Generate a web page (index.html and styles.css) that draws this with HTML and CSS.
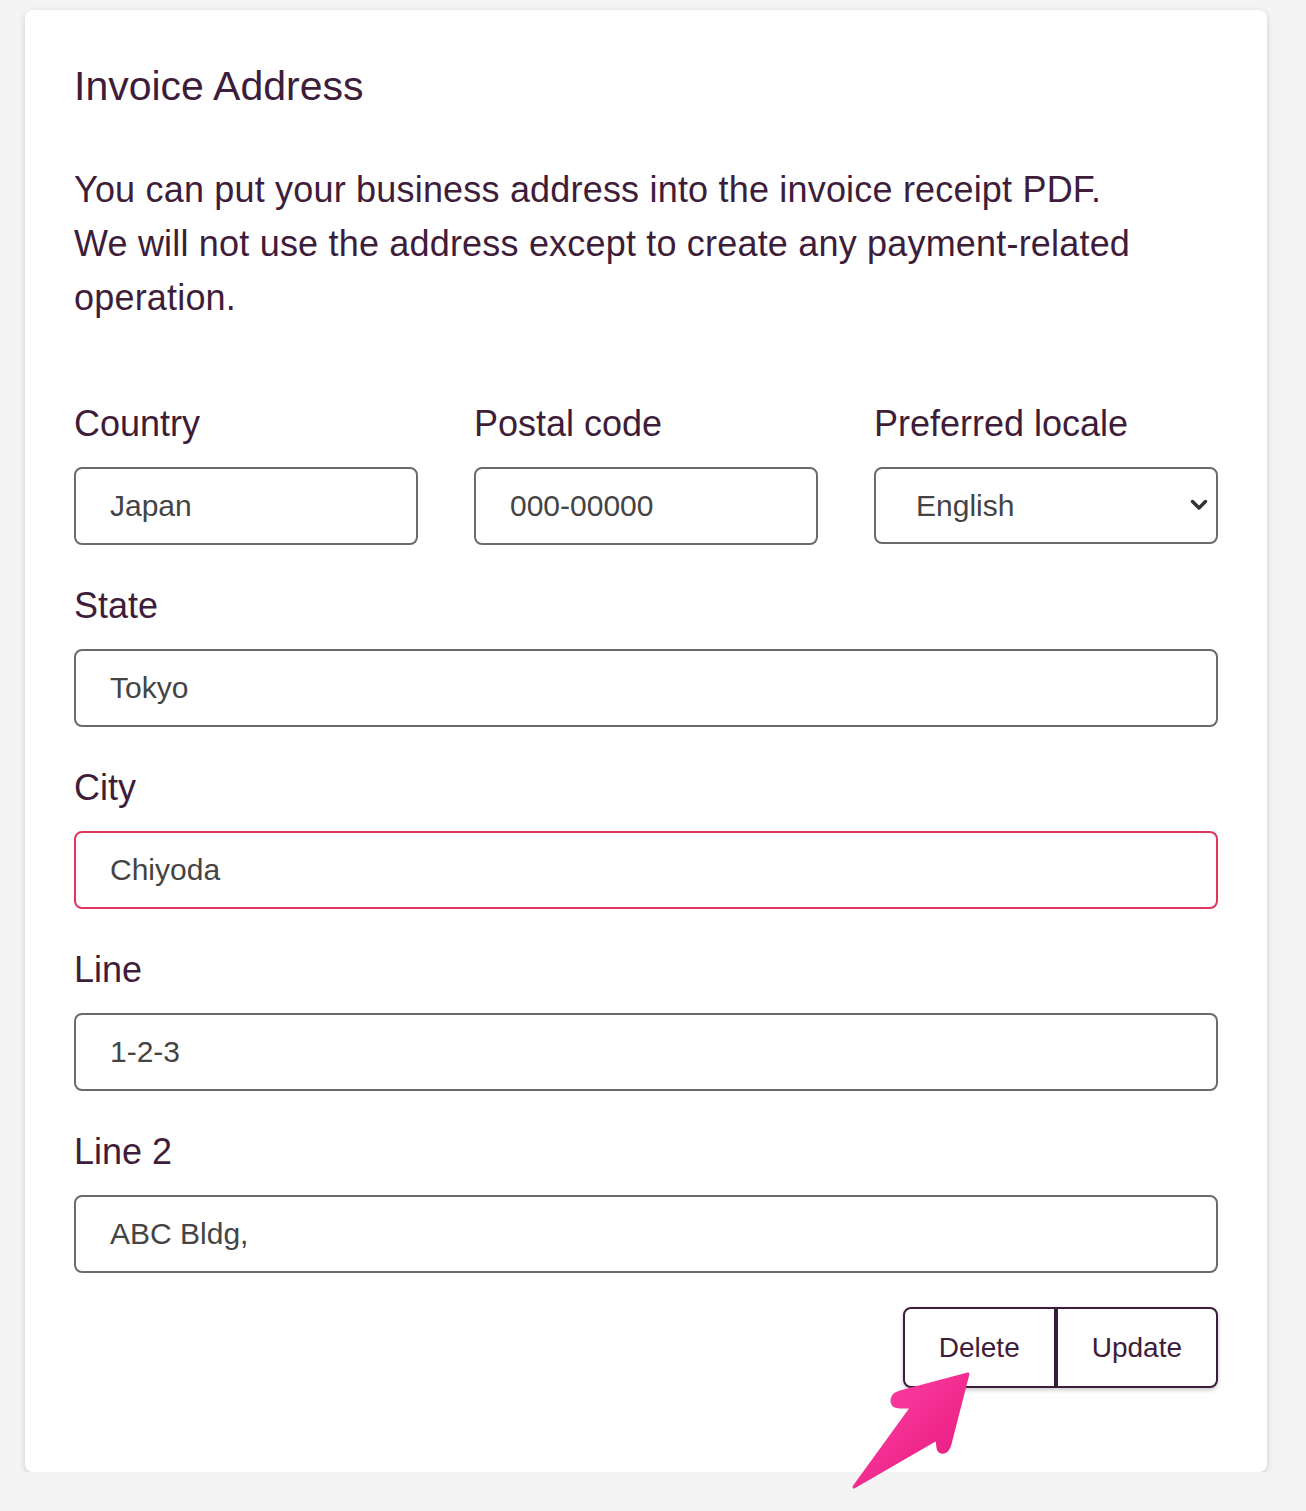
FILE: index.html
```html
<!DOCTYPE html>
<html lang="en">
<head>
<meta charset="utf-8">
<title>Invoice Address</title>
<link rel="stylesheet" href="styles.css">
</head>
<body>
<div class="card">
  <h2 class="title">Invoice Address</h2>
  <p class="desc">You can put your business address into the invoice receipt PDF.<br>We will not use the address except to create any payment-related operation.</p>
  <form class="form">
    <div class="row3">
      <div class="field">
        <label class="label">Country</label>
        <input class="input" type="text" value="Japan">
      </div>
      <div class="field">
        <label class="label">Postal code</label>
        <input class="input" type="text" value="000-00000">
      </div>
      <div class="field">
        <label class="label">Preferred locale</label>
        <div class="select-wrap">
          <select class="select"><option>English</option></select>
          <svg class="chev" width="18" height="12" viewBox="0 0 18 12"><path d="M2.5 2.5 L9 9 L15.5 2.5" fill="none" stroke="#333" stroke-width="3.4" stroke-linecap="round" stroke-linejoin="round"/></svg>
        </div>
      </div>
    </div>
    <div class="field">
      <label class="label">State</label>
      <input class="input" type="text" value="Tokyo">
    </div>
    <div class="field">
      <label class="label">City</label>
      <input class="input input-error" type="text" value="Chiyoda">
    </div>
    <div class="field">
      <label class="label">Line</label>
      <input class="input" type="text" value="1-2-3">
    </div>
    <div class="field">
      <label class="label">Line 2</label>
      <input class="input" type="text" value="ABC Bldg,">
    </div>
    <div class="actions">
      <button type="button" class="btn btn-left">Delete</button><button type="button" class="btn btn-right">Update</button>
    </div>
  </form>
</div>
<svg class="pointer" width="140" height="140" viewBox="0 0 140 140">
  <defs>
    <linearGradient id="pg" x1="0" y1="0" x2="1" y2="1">
      <stop offset="0" stop-color="#ff45a8"/>
      <stop offset="0.6" stop-color="#f0288c"/>
      <stop offset="1" stop-color="#e21c80"/>
    </linearGradient>
  </defs>
  <path d="M128,14 L60,32 Q51,35 52,42 Q53,47 60,47 L72,47 L14,127 L97,79 L98,88 Q99,93 104,92 Q108,91 110,84 Z" fill="url(#pg)" stroke="url(#pg)" stroke-width="3" stroke-linejoin="round"/>
</svg>
</body>
</html>
```
FILE: styles.css
```css
html, body {
  margin: 0;
  padding: 0;
  background: #f4f4f4;
}
body {
  font-family: "Liberation Sans", Arial, Helvetica, sans-serif;
  color: #3e1d3a;
  padding: 10px 0 0 25px;
}
.card {
  width: 1242px;
  box-sizing: border-box;
  background: #ffffff;
  border-radius: 8px;
  box-shadow: 0 2px 6px rgba(0, 0, 0, 0.16);
  padding: 48px 49px 84px 49px;
}
.title {
  margin: 0;
  font-size: 41px;
  font-weight: normal;
  line-height: 56px;
}
.desc {
  margin: 49px 0 0 0;
  font-size: 36px;
  line-height: 54px;
  letter-spacing: 0.19px;
}
.form {
  margin-top: 72px;
  display: flex;
  flex-direction: column;
  gap: 34px;
}
.row3 {
  display: grid;
  grid-template-columns: repeat(3, 1fr);
  column-gap: 56px;
}
.field {
  display: flex;
  flex-direction: column;
}
.label {
  font-size: 36px;
  line-height: 54px;
  margin-bottom: 16px;
}
.input,
.select {
  box-sizing: border-box;
  width: 100%;
  height: 78px;
  border: 2px solid #6b6b6b;
  border-radius: 8px;
  padding: 0 34px;
  font-family: "Liberation Sans", Arial, Helvetica, sans-serif;
  font-size: 30px;
  color: #444444;
  background: #ffffff;
  outline: none;
}
.input-error {
  border-color: #e0355f;
}
.select-wrap {
  position: relative;
}
.select {
  -webkit-appearance: none;
  appearance: none;
  height: 77px;
  padding: 0 40px;
}
.chev {
  position: absolute;
  right: 10px;
  top: 32px;
  pointer-events: none;
}
.actions {
  display: flex;
  justify-content: flex-end;
}
.btn {
  height: 81px;
  padding: 0 34px;
  border: 2px solid #3e1d3a;
  background: #ffffff;
  color: #3e1d3a;
  font-family: "Liberation Sans", Arial, Helvetica, sans-serif;
  font-size: 28px;
  box-shadow: 0 2px 4px rgba(0, 0, 0, 0.22);
  cursor: pointer;
}
.btn-left {
  border-radius: 8px 0 0 8px;
}
.btn-right {
  border-radius: 0 8px 8px 0;
}
.pointer {
  position: absolute;
  left: 840px;
  top: 1360px;
}
```
